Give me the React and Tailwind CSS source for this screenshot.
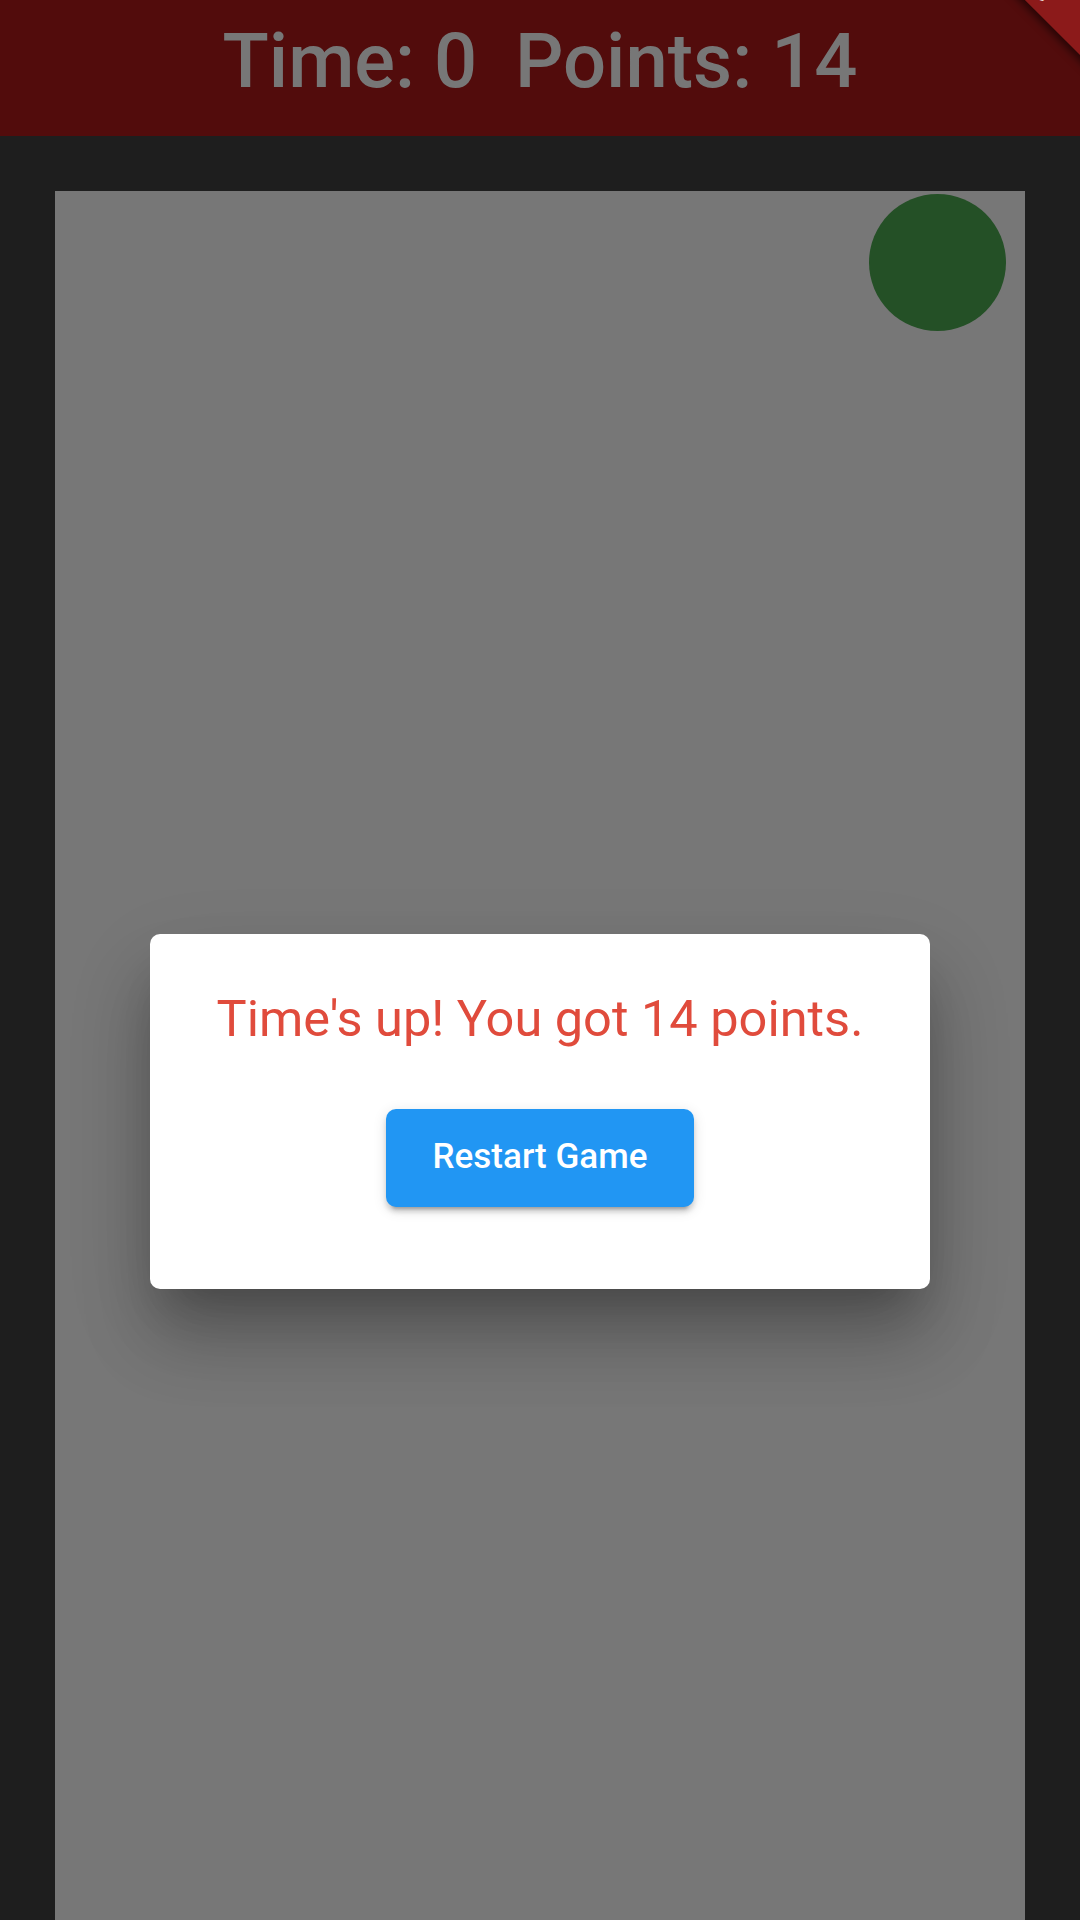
const App = () => {
    return (
        <div className="relative w-full h-[1920px] overflow-hidden bg-[#1e1e1e] flex flex-col font-['Roboto',sans-serif]">
            <header className="h-[136px] shrink-0 bg-[#520c0c] flex items-center justify-center">
                <h1 className="text-[76px] leading-none font-medium text-[#777777] whitespace-pre -translate-y-[7px]">
                    Time: 0  Points: 14
                </h1>
            </header>

            {/* play field */}
            <main className="flex-1 flex flex-col px-[55px] pt-[55px]">
                <div className="relative flex-1 bg-[#777777]">
                    <div className="absolute top-[3px] right-[19px] w-[137px] h-[137px] rounded-full bg-[#245026]" />
                </div>
            </main>

            {/* debug ribbon, mostly cut off by the top edge */}
            <div className="absolute top-[-10px] right-[-138px] w-[300px] h-[44px] rotate-45 bg-[#8c1a1a] shadow-[0_4px_8px_rgba(0,0,0,0.55)]">
                <span className="absolute right-[174px] bottom-[5px] text-[27px] font-bold text-white leading-none">DEBUG</span>
            </div>

            {/* game over dialog */}
            <div className="absolute inset-0 flex justify-center items-start pt-[934px]">
                <div className="w-[780px] h-[355px] bg-white rounded-[10px] shadow-[0_30px_41px_-19px_rgba(0,0,0,0.2),0_50px_70px_0_rgba(0,0,0,0.18),0_35px_90px_0_rgba(0,0,0,0.12)] flex flex-col items-center pt-[60px]">
                    <p className="text-[50.5px] leading-none text-[#e04b3c]">
                        Time's up! You got 14 points.
                    </p>
                    <button className="mt-[64px] w-[308px] h-[98px] rounded-[10px] bg-[#2196f3] text-white text-[35px] font-medium shadow-[0_8px_3px_-6px_rgba(0,0,0,0.2),0_5px_5px_0_rgba(0,0,0,0.14),0_3px_14px_0_rgba(0,0,0,0.12)]">
                        Restart Game
                    </button>
                </div>
            </div>
        </div>
    );
};

export default App;
